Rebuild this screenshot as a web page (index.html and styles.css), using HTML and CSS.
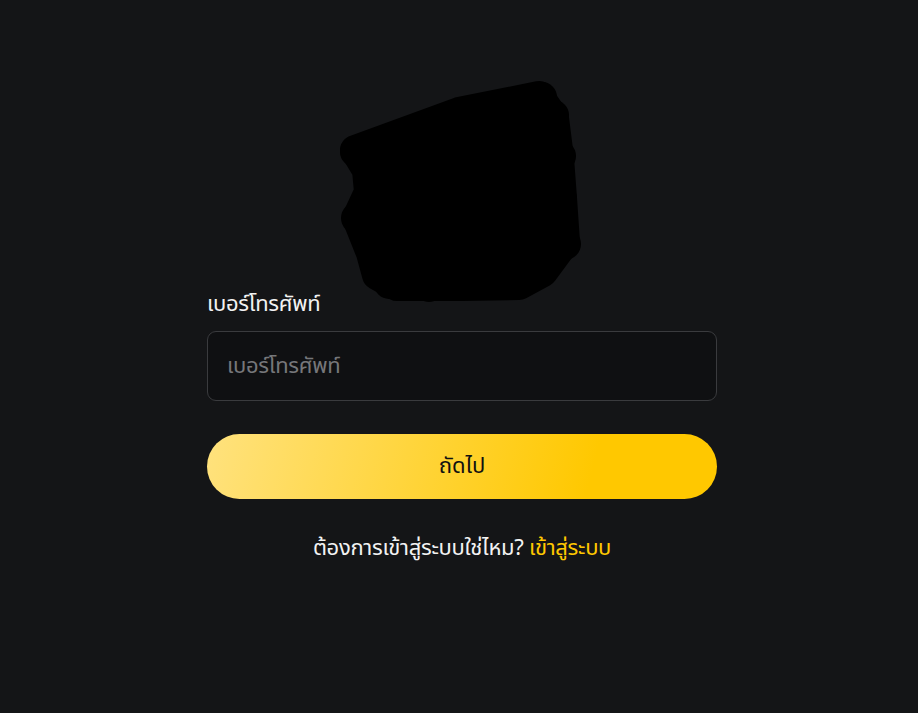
FILE: index.html
```html
<!DOCTYPE html>
<html lang="th">
<head>
<meta charset="utf-8">
<link rel="stylesheet" href="styles.css">
</head>
<body>
<main class="page">
  <div class="logo">
    <svg width="250" height="225" viewBox="335 78 250 225" aria-hidden="true">
      <path class="scribble" d="M356,150 L460,112 L540,96 L555,118 L560,158 L563,198 L566,242 L544,272 L520,285 L463,286 L398,286 L378,275 L372,253 L358,218 L370,192 L368,170 Z"/>
      <circle cx="543" cy="97" r="15"/>
      <circle cx="555" cy="115" r="15"/>
      <circle cx="561" cy="156" r="16"/>
      <circle cx="562" cy="199" r="16"/>
      <circle cx="566" cy="244" r="16"/>
      <circle cx="356" cy="152" r="15"/>
      <circle cx="372" cy="172" r="15"/>
      <circle cx="358" cy="218" r="16"/>
      <circle cx="390" cy="284" r="15"/>
      <circle cx="430" cy="290" r="12"/>
      <circle cx="490" cy="285" r="14"/>
      <circle cx="528" cy="274" r="16"/>
    </svg>
  </div>
  <form class="form">
    <label class="label" for="phone">เบอร์โทรศัพท์</label>
    <input class="input" id="phone" type="text" placeholder="เบอร์โทรศัพท์">
    <button class="btn" type="button">ถัดไป</button>
    <p class="switch">ต้องการเข้าสู่ระบบใช่ไหม? <a class="link" href="#">เข้าสู่ระบบ</a></p>
  </form>
</main>
</body>
</html>
```
FILE: styles.css
```css
html, body {
  margin: 0;
  padding: 0;
  background: #141517;
  height: 100%;
}
body {
  font-family: "Noto Sans Thai", "Noto Sans", "DejaVu Sans", sans-serif;
  color: #ffffff;
}
.page {
  display: flex;
  flex-direction: column;
  align-items: center;
  padding: 78px 0 0 6px;
}
.logo {
  display: flex;
  justify-content: center;
  width: 250px;
  height: 225px;
  margin-left: -6px;
}
.logo svg { display: block; fill: #000; }
.scribble {
  fill: #000;
  stroke: #000;
  stroke-width: 30;
  stroke-linejoin: round;
}
.form {
  width: 510px;
  display: flex;
  flex-direction: column;
  margin: -12px 0 0;
}
.label {
  font-size: 22px;
  line-height: 28px;
  color: #f2f2f2;
  letter-spacing: -0.3px;
}
.input {
  margin-top: 12px;
  height: 70px;
  box-sizing: border-box;
  background: #0f1012;
  border: 1px solid #3a3b3e;
  border-radius: 9px;
  padding: 0 19px;
  font-family: inherit;
  font-size: 22px;
  letter-spacing: -0.3px;
  color: #fff;
  outline: none;
}
.input::placeholder { color: #76777a; }
.btn {
  margin-top: 33px;
  height: 65px;
  border: none;
  border-radius: 33px;
  background: linear-gradient(105deg, #ffe27e 0%, #ffd333 45%, #ffc800 75%, #ffc800 100%);
  color: #111;
  font-family: inherit;
  font-size: 22px;
  cursor: pointer;
}
.switch {
  margin: 36px 0 0;
  text-align: center;
  font-size: 22px;
  line-height: 28px;
  color: #f2f2f2;
  letter-spacing: -0.3px;
}
.link {
  color: #ffc800;
  text-decoration: none;
}
```
